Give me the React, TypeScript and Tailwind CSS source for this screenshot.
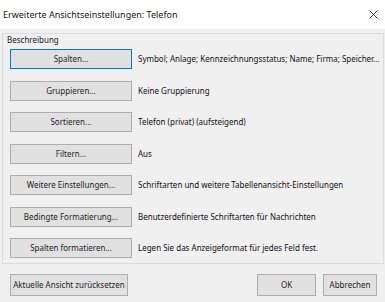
import React from "react";

const rows: [string, string][] = [
  ["Spalten...", "Symbol; Anlage; Kennzeichnungsstatus; Name; Firma; Speicher..."],
  ["Gruppieren...", "Keine Gruppierung"],
  ["Sortieren...", "Telefon (privat) (aufsteigend)"],
  ["Filtern...", "Aus"],
  ["Weitere Einstellungen...", "Schriftarten und weitere Tabellenansicht-Einstellungen"],
  ["Bedingte Formatierung...", "Benutzerdefinierte Schriftarten für Nachrichten"],
  ["Spalten formatieren...", "Legen Sie das Anzeigeformat für jedes Feld fest."],
];

export default function App() {
  return (
    <div
      className="w-[385px] h-[302px] bg-[#f0f0f0] text-[#1e1e1e] text-[8px] flex flex-col overflow-hidden"
      style={{ fontFamily: '"Noto Sans", "Open Sans", sans-serif' }}
    >
      <div className="h-[29px] bg-white flex items-center justify-between pl-[3px] pr-[6px] shrink-0">
        <span className="text-[9px] text-[#1a1a1a] whitespace-nowrap">Erweiterte Ansichtseinstellungen: Telefon</span>
        <svg width="9" height="9" viewBox="0 0 9 9" className="mr-[1px]">
          <path d="M0.5 0.5 L8.5 8.5 M8.5 0.5 L0.5 8.5" stroke="#333" strokeWidth="1" />
        </svg>
      </div>
      <div className="ml-[2px] mr-[1px] mt-[4px] h-[231px] border border-[#dcdcdc] flex flex-col shrink-0">
        <div className="pl-[4px] h-[14px] leading-[12px] text-[#222]">Beschreibung</div>
        <div className="flex flex-col gap-[11.5px] pl-[7px] pt-[1px]">
          {rows.map(([b, d], i) => (
            <div key={b} className="flex items-center gap-[6px]">
              <div
                className={
                  "w-[122px] h-[20px] shrink-0 flex items-center justify-center whitespace-nowrap bg-[#e1e1e1] border " +
                  (i === 0 ? "border-[#0078d7]" : "border-[#adadad]")
                }
              >
                {b}
              </div>
              <span className="whitespace-nowrap overflow-hidden text-ellipsis text-[#111]">{d}</span>
            </div>
          ))}
        </div>
      </div>
      <div className="flex items-center mt-[10px] pl-[10px]">
        <div className="w-[118px] h-[22px] flex items-center justify-center whitespace-nowrap bg-[#e1e1e1] border border-[#adadad]">
          Aktuelle Ansicht zurücksetzen
        </div>
        <div className="ml-auto w-[59px] h-[22px] flex items-center justify-center bg-[#e1e1e1] border border-[#adadad]">
          OK
        </div>
        <div className="ml-[7px] mr-[8px] w-[54px] h-[22px] flex items-center justify-center bg-[#e1e1e1] border border-[#adadad]">
          Abbrechen
        </div>
      </div>
    </div>
  );
}
